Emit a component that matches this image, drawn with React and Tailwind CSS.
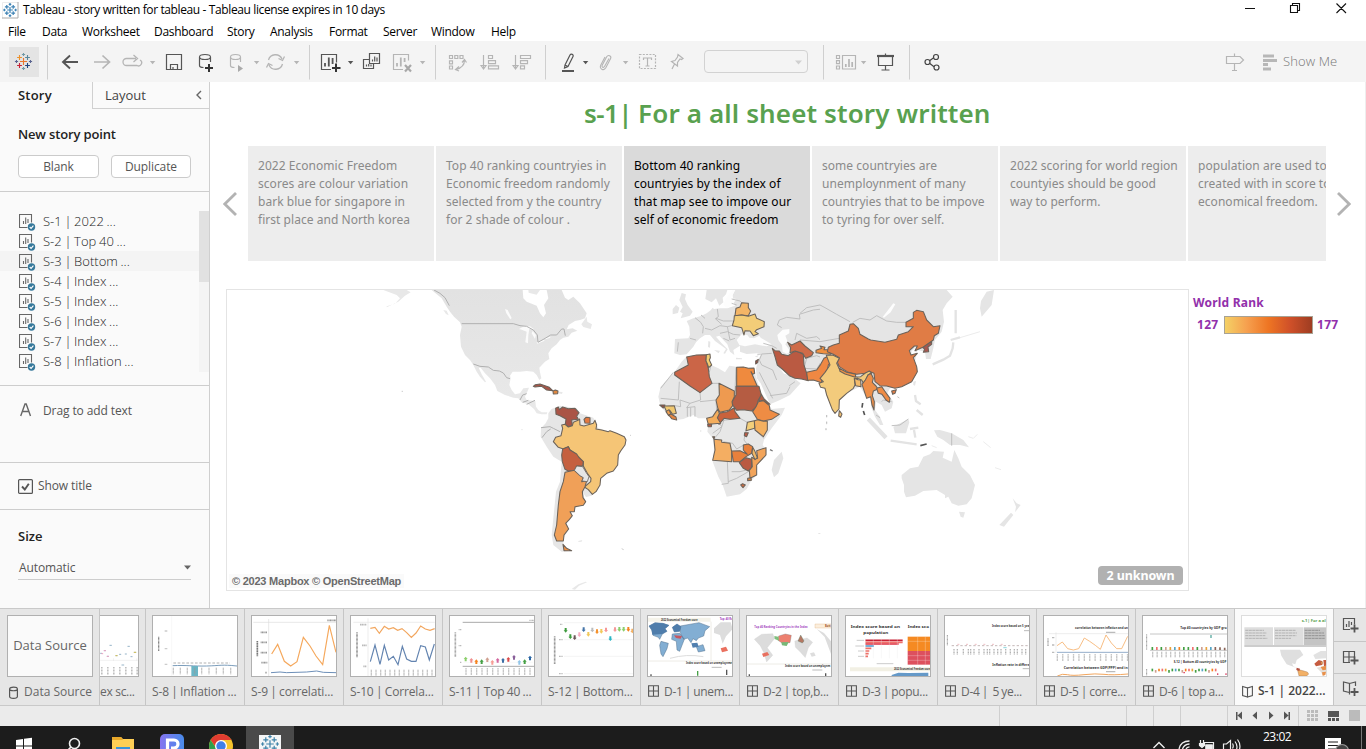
import React from "react";

/* Drawing surface whose coordinates are window pixels. */
function Ic({ x, w, y = 41, h = 41, children, s = "#b5b5b5" }) {
  return (
    <svg className="block shrink-0" width={w} height={h} viewBox={`${x} ${y} ${w} ${h}`} fill="none" stroke={s} strokeWidth="1.2">
      {children}
    </svg>
  );
}
const Caret = ({ x, c = "#b5b5b5", y = 61 }) => <path d={`M${x - 2.6} ${y}h5.4l-2.7 3.2z`} fill={c} stroke="none" />;
const Sep = ({ x }) => <path d={`M${x} 45v34.500`} stroke="#cfcfcf" strokeWidth="1" />;

function Crosses({ cx, cy, k = 1, mono }) {
  const list = [
    [0, 0, 3.6, "#e8762d"], [-4, -4, 2.4, "#eb912c"], [4, -4, 2.4, "#59879b"], [-4, 4, 2.4, "#c72035"], [4, 4, 2.4, "#1f447e"],
    [0, -7, 1.6, "#7099a6"], [0, 7, 1.6, "#7099a6"], [-7, 0, 1.6, "#5b6591"], [7, 0, 1.6, "#5b6591"],
  ];
  return list.map(([x, y, r, c], i) => (
    <path key={i} d={`M${cx + (x - r) * k} ${cy + y * k}h${2 * r * k}M${cx + x * k} ${cy + (y - r) * k}v${2 * r * k}`} stroke={mono || c} strokeWidth={mono ? 1.2 : 1.1} />
  ));
}

function TitleBar() {
  return (
    <div className="flex h-5 items-center bg-white">
      <svg className="ml-0.5 block h-[17px] w-[17px] shrink-0" viewBox="0 0 17 17" fill="none">
        <path d="M.5 16.500V.5h16" stroke="#ececec" /><path d="M16 0v16H0" stroke="#aaa" />
        <Crosses cx={8} cy={8} k={0.8} mono="#3d82b4" />
      </svg>
      <span className="ml-1 whitespace-pre font-['Open_Sans','Noto_Sans',sans-serif] text-[12px] leading-5 tracking-[-0.38px] text-black">Tableau - story written for tableau - Tableau license expires in 10 days</span>
      <div className="ml-auto flex">
        <Ic x={1236} w={130} y={0} h={20} s="#111">
          <path d="M1245 8.500h10M1290.500 5.500h7v7h-7zM1292.500 5.500v-2h7v7h-2M1336.500 3.500l9.500 9.500M1346 3.500l-9.500 9.500" strokeWidth="1.100" />
        </Ic>
      </div>
    </div>
  );
}

function MenuBar() {
  return (
    <div className="flex h-[21px] bg-white pl-2 font-['Open_Sans','Noto_Sans',sans-serif] text-[12px] leading-[23px] tracking-[-0.3px] text-black">
      <span className="w-[34px]">File</span>
      <span className="w-10">Data</span>
      <span className="w-[72px]">Worksheet</span>
      <span className="w-[73px]">Dashboard</span>
      <span className="w-[43px]">Story</span>
      <span className="w-[59px]">Analysis</span>
      <span className="w-[54px]">Format</span>
      <span className="w-12">Server</span>
      <span className="w-[60px]">Window</span>
      <span>Help</span>
    </div>
  );
}

function Toolbar() {
  const d = "#555";
  return (
    <div className="flex h-[41px] bg-[#f4f4f4]">
      <Ic x={0} w={50}>
        <rect x="9" y="47" width="30" height="30" fill="#e4e4e4" stroke="none" />
        <Crosses cx={23.5} cy={61.5} />
        <Sep x={47.5} />
      </Ic>
      <Ic x={50} w={65}>
        <path d="M78 62H63M70 55.500L63 62l7 6.500" stroke={d} strokeWidth="1.900" />
        <path d="M94 62h15M102.500 55.500l7 6.500-7 6.500" strokeWidth="1.700" />
      </Ic>
      <Ic x={115} w={45}>
        <path d="M136 58.500h-9.500a3 3 0 000 7h10.500a3 3 0 003-5.500M133.500 55l4 3.500-4 3.500" strokeWidth="1.300" />
        <Caret x={152.5} />
      </Ic>
      <Ic x={160} w={60} s={d}>
        <path d="M166.500 54.500h15v15h-15zM170.500 69.500v-5h7v5M173 67v2.500" />
        <path d="M199.500 57v8.500c0 1.300 2 2 4 2M210.500 57v5M199.500 57c0-1.500 2.500-2.500 5.500-2.500s5.500 1 5.500 2.500-2.500 2.500-5.500 2.500-5.500-1-5.500-2.500z" />
        <path d="M209 64v8M205 68h8" stroke="#333" strokeWidth="2" />
      </Ic>
      <Ic x={220} w={90}>
        <path d="M230.500 57v8.500c0 1.300 2 2 4 2M240.500 57v5M230.500 57c0-1.500 2.200-2.500 5-2.500s5 1 5 2.500-2.200 2.500-5 2.500-5-1-5-2.500z" />
        <path d="M238 65v7l5-3.500z" fill="#aaa" stroke="none" />
        <Caret x={256.5} />
        <path d="M268.500 60a7.200 7.200 0 0113.500-1M282.500 64a7.200 7.200 0 01-13.500 1M284.500 56.500l-2 4-4-2M266.500 67.500l2-4 4 2" strokeWidth="1.300" />
        <Caret x={296.5} />
        <Sep x={309.5} />
      </Ic>
      <Ic x={310} w={50} s={d}>
        <path d="M331 69.500h-9.500v-15h15v8" />
        <path d="M325 66.500V63M328.800 66.500v-9M332.600 64v-6" strokeWidth="1.800" />
        <path d="M336 63.500v8.500M332 68h8.500" stroke="#333" strokeWidth="2" />
        <Caret x={350.5} c={d} />
      </Ic>
      <Ic x={360} w={76} s={d}>
        <path d="M369.500 53.500h10v10h-10zM369 59.500h-5.500v9h10v-5M372.500 61.500v-2M374.700 61.500v-5M377 61.500v-4M366.500 66.500v-2M368.700 66.500v-2.500M371 66.500v-2" />
        <g stroke="#b5b5b5"><path d="M403 69.500h-9.500v-15h15v6" /><path d="M397 66.500V63M400.800 66.500v-9M404.600 62v-4" strokeWidth="1.800" /><path d="M405 65l6 6.500M411 65l-6 6.500" strokeWidth="2.200" stroke="#a8a8a8" /></g>
        <Caret x={422.5} />
        <Sep x={435.5} />
      </Ic>
      <Ic x={436} w={110}>
        <path d="M449.500 55.500h3v3h-3zM454.800 55.500h3v3h-3zM460 55.500h3v3h-3zM449.500 60.800h3v3h-3zM449.500 66h3v3h-3zM464.500 60c0 5-2.500 8-8.500 9.500M462 62.500l2.500-3 2 3M459 66.500l-3.500 3 3.500 1.500" />
        <path d="M483.500 55v13M481 65.500l2.500 3.500 2.500-3.500zM488.500 55.500h4v3h-4zM488.500 60.700h7v3h-7zM488.500 65.800h10v3h-10z" />
        <path d="M515.500 55v13M513 65.500l2.500 3.500 2.500-3.500zM520.500 55.500h10v3h-10zM520.500 60.700h7v3h-7zM520.500 65.800h4v3h-4z" />
        <Sep x={545.5} />
      </Ic>
      <Ic x={546} w={50} s={d}>
        <path d="M562 71h12" strokeWidth="2" />
        <path d="M565 65l5-10c1-1.700 4-.5 3 1.500l-5 10-3.500 1.500zM565 65l3 1.500" />
        <Caret x={585.5} c={d} />
      </Ic>
      <Ic x={596} w={40}>
        <path d="M609 58.500l-4.500 8c-1 1.700-3.200.5-2.300-1.200l4.500-8.500c1.500-2.600 5.200-.7 3.800 2l-4.700 9c-2 3.500-7 1-5-2.700l4.200-8" strokeWidth="1.100" />
        <Caret x={625.5} />
      </Ic>
      <Ic x={636} w={60}>
        <rect x="639.500" y="54.500" width="16" height="14" strokeDasharray="2 1.300" />
        <path d="M643.500 60v-2h8v2M647.500 58v8M645.500 66h4" />
        <path d="M678 54.500l5 4-1.500 1-1.500-.5-2.500 3.500v3.500l-6-4.500 3.500-1 2.500-3.500zM674.500 64l-2.500 5" />
      </Ic>
      <div className="ml-2 mt-[9px] h-[23px] w-[104px] rounded-sm border border-[#d2d2d2]">
        <Ic x={704} w={102} y={51} h={21} s="#ccc"><path d="M794 60.500h7l-3.500 4z" fill="#d0d0d0" stroke="none" /></Ic>
      </div>
      <Ic x={808} w={62}>
        <Sep x={823.5} />
        <path d="M836.500 55.500h3v3h-3zM836.500 60.700h3v3h-3zM836.500 66h3v3h-3zM842.500 55.500h13v13.500h-13z" />
        <path d="M845.800 67v-3M849 67v-8M852.200 67v-5" strokeWidth="1.700" />
        <Caret x={863.5} />
      </Ic>
      <Ic x={870} w={40} s={d}>
        <path d="M877 56h17" strokeWidth="2.200" />
        <path d="M878.500 57v8.500h14V57M885.500 66v4M881.500 70h8M885.500 53.500v2" />
        <Sep x={909.5} />
      </Ic>
      <Ic x={910} w={40} s="#444">
        <path d="M929.500 60.800l4.200-3M929.500 63.200l4.500 3.500" />
        <circle cx="927.500" cy="62" r="2.500" /><circle cx="936" cy="57" r="2.500" /><circle cx="936.500" cy="67.500" r="2.500" />
      </Ic>
      <div className="ml-auto flex">
        <Ic x={1220} w={60}>
          <path d="M1226.500 56.500h13.500l3.500 3.500-3.500 3.500h-13.500zM1234.500 53.500v3M1234.500 63.500v7M1232 70.500h5" />
          <path d="M1263 56h11M1263 60.500h14M1263 64.500h5M1263 69h8" stroke="#b7b7b7" strokeWidth="3" />
        </Ic>
        <span className="w-[86px] pl-[3px] font-['Open_Sans',sans-serif] text-[13px] font-light leading-[41px] tracking-[0.1px] text-[#777]">Show Me</span>
      </div>
    </div>
  );
}

const POINTS = ["S-1 | 2022 ...", "S-2 | Top 40 ...", "S-3 | Bottom ...", "S-4 | Index ...", "S-5 | Index ...", "S-6 | Index ...", "S-7 | Index ...", "S-8 | Inflation ..."];

function SheetIcon() {
  return (
    <svg className="block h-[18px] w-[18px] shrink-0" viewBox="0 0 18 18" fill="none" stroke="#666" strokeWidth="1.100">
      <path d="M8.500 13.500H.5V.5h12v8M4.500 10V7M6.700 10V3.500M9 9V5" />
      <circle cx="12.500" cy="13" r="3.700" fill="#37799b" stroke="none" />
      <path d="M10.700 13l1.400 1.400 2.300-2.700" stroke="#fff" />
    </svg>
  );
}

function Sidebar() {
  return (
    <aside className="flex w-[210px] shrink-0 flex-col border-r border-[#cfcfcf] bg-[#fafafa] font-['Open_Sans',sans-serif] text-[12px] tracking-[-0.1px] text-[#555]">
      <div className="flex h-[27px] text-[13px] leading-[27px] tracking-normal">
        <div className="w-[92px] pl-[18px] font-semibold tracking-[0.2px] text-[#222]">Story</div>
        <div className="flex flex-1 border-b border-l border-[#d0d0d0] pl-3 text-[#444]">
          <span className="w-[85px]">Layout</span>
          <Ic x={190} w={14} y={82} h={26} s="#666"><path d="M201 91l-4 4 4 4" strokeWidth="1.400" /></Ic>
        </div>
      </div>
      <div className="flex h-[83px] flex-col border-b border-[#cdcdcd] pl-[18px]">
        <div className="mt-4 text-[13px] font-semibold leading-[18px] tracking-[-0.15px] text-[#222]">New story point</div>
        <div className="mt-3 flex gap-3">
          <div className="h-[23px] w-[81px] rounded-sm border border-[#cbcbcb] bg-white text-center leading-[21px]">Blank</div>
          <div className="h-[23px] w-20 rounded-sm border border-[#cbcbcb] bg-white text-center leading-[21px]">Duplicate</div>
        </div>
      </div>
      <div className="flex h-[194px] border-b border-[#cdcdcd] pt-[19px]">
        <div className="flex-1">
          {POINTS.map((p, i) => (
            <div key={p} className={i === 2 ? "flex h-5 items-center bg-[#f4f4f4] pl-[19px]" : "flex h-5 items-center pl-[19px]"}>
              <span className="pt-1"><SheetIcon /></span>
              <span className="ml-1.5 text-[13px] font-light leading-5 tracking-[0.03px] text-[#222] [word-spacing:-0.8px]">{p}</span>
            </div>
          ))}
        </div>
        <div className="h-[161px] w-2.5 bg-[#f4f4f4]"><div className="h-[71px] bg-[#e1e1e1]" /></div>
      </div>
      <div className="flex h-[77px] items-start border-b border-[#cdcdcd] pl-5 pt-4">
        <Ic x={20} w={12} y={402} h={18} s="#666"><path d="M20.700 416l4.300-12h1.200l4.300 12M22 411.500h7.200" strokeWidth="1.400" /></Ic>
        <span className="ml-[11px] leading-[18px]">Drag to add text</span>
      </div>
      <div className="flex h-[47px] items-center border-b border-[#cdcdcd] pl-[18px]">
        <Ic x={0} w={15} y={0} h={15} s="#555"><rect x=".6" y=".6" width="13.800" height="13.800" rx="1" /><path d="M4 7.500l2.800 3 4-5.800" strokeWidth="1.900" /></Ic>
        <span className="ml-[5px]">Show title</span>
      </div>
      <div className="mt-[16px] pl-[18px] text-[13px] font-semibold leading-[20px] tracking-normal text-[#222]">Size</div>
      <div className="ml-[18px] mt-[10px] flex h-[24px] w-[173px] items-center justify-between border-b border-[#cdcdcd] pl-px">
        <span className="leading-[22px]">Automatic</span>
        <Ic x={0} w={7} y={0} h={5}><path d="M0 .5h7L3.500 4.500z" fill="#666" stroke="none" /></Ic>
      </div>
    </aside>
  );
}

const CARDS = [
  ["2022 Economic Freedom", "scores are colour variation", "bark blue for singapore in", "first place and North korea"],
  ["Top 40 ranking countryies in", "Economic freedom randomly", "selected from y the country", "for 2 shade of colour ."],
  ["Bottom 40 ranking", "countryies by the index of", "that map see to impove our", "self of economic freedom"],
  ["some countryies are", "unemploynment of many", "countryies that to be impove", "to tyring for over self."],
  ["2022 scoring for world region", "countyies should be good", "way to perform."],
  ["population are used to", "created with in score to", "economical freedom."],
];

const NORTH_AMERICA = "M155 15L185 40L200 65L210 80L222 95L240 112L245 125L240 150L243 185L255 210L270 225L280 240L290 260L300 275L315 292L318 290L305 268L296 248L302 248L315 265L330 280L345 300L352 318L375 330L400 338L415 340L425 352L445 358L462 372L470 385L485 388L500 388L502 382L485 382L475 375L468 365L466 348L440 345L435 335L443 318L447 308L430 310L420 325L405 328L395 315L388 300L392 280L390 272L398 260L420 260L440 258L460 260L470 270L478 285L484 280L480 262L478 248L495 230L508 222L505 205L515 190L530 178L540 165L550 158L565 155L575 143L592 137L578 130L560 133L566 120L585 108L600 105L615 100L620 85L600 55L580 35L565 45L555 38L545 15L500 15L505 40L492 60L498 85L490 97L480 85L470 62L440 50L430 40L428 15Z";
const SOUTH_AMERICA = "M505 385L515 372L540 362L590 370L600 385L640 398L655 430L710 445L738 465L735 480L715 510L705 550L690 560L662 580L655 605L635 632L618 636L608 622L617 655L585 670L570 685L577 697L560 712L565 735L550 760L550 795L575 797L545 800L520 780L515 750L520 700L528 620L540 590L545 530L520 515L500 485L482 455L483 430L497 415L505 400Z";

const AMERICAS = [
  ["M460 304L466 299L480 297L495 302L508 307L518 317L500 315L485 304L465 306Z", "#a85447"],
  ["M519 318L526 315L534 318L533 326L520 327Z", "#e0873f"],
  ["M527 370L535 366L538 374L548 366L565 371L585 370L597 383L590 394L595 403L575 405L577 420L565 426L556 418L558 402L540 392L528 388Z", "#aa5446"],
  ["M612 403L618 397L630 398L630 415L615 414Z", "#e37840"],
  ["M545 420L555 418L565 426L577 422L580 412L594 406L599 402L600 420L612 423L630 418L640 415L645 406L650 420L648 432L665 435L685 440L690 437L710 445L733 455L738 465L735 480L722 498L715 510L713 540L700 558L680 565L662 580L660 600L648 620L637 628L625 614L613 606L632 590L633 580L622 565L610 543L610 530L595 520L585 505L570 495L565 485L550 492L535 487L520 470L527 457L543 452L548 430Z", "#f5c576"],
  ["M548 492L565 485L570 495L590 507L596 516L610 530L608 543L590 543L583 558L565 558L555 553L547 530L545 510Z", "#c5603f"],
  ["M555 562L583 556L600 572L610 578L605 590L620 588L615 605L607 620L609 638L617 650L610 661L585 665L583 680L570 680L577 692L567 705L557 715L566 732L552 750L550 768L530 768L523 750L530 720L535 660L540 620L550 590Z", "#f0a058"],
  ["M549 778L560 790L575 797L552 797Z", "#ef9045"],
];

const EURASIA = "M285 15L278 30L280 50L285 62L262 70L240 70L222 72L218 68L212 76L200 85L185 92L160 100L140 108L148 125L150 150L145 160L105 162L103 205L120 210L140 208L160 185L168 172L180 160L195 150L210 150L225 168L245 182L258 192L250 205L255 206L263 193L245 175L228 155L238 152L250 165L262 178L270 200L283 210L280 195L300 182L300 200L320 207L350 205L366 205L358 218L348 250L350 280L362 295L380 335L390 358L420 345L450 330L482 295L465 282L450 270L432 266L412 240L440 262L470 282L530 288L545 300L600 300L600 15Z";
const AFRICA = "M140 214L170 209L205 207L213 240L235 250L255 262L268 242L290 245L325 250L343 250L348 275L362 320L385 355L395 372L435 368L425 390L395 430L372 465L368 480L380 495L378 515L350 540L348 572L332 590L320 612L300 628L260 635L248 600L235 575L218 530L222 490L218 460L202 440L205 420L200 400L175 400L160 390L130 402L110 405L90 395L62 365L55 335L62 305L80 285L103 262L125 230Z";
const WEST = [
  ["M140 216L170 210L200 209L198 225L205 250L208 275L216 295L180 323L150 303L104 270L104 262L145 240Z", "#cb6547"],
  ["M199 209L210 207L211 218L208 225L215 240L206 248L202 236L198 228Z", "#f5cd72"],
  ["M290 247L310 246L325 250L342 249L344 265L338 268L333 260L352 304L290 304Z", "#ef8a3e"],
  ["M288 304L357 304L364 330L355 345L350 365L335 378L310 374L290 376L278 360L276 350L288 330Z", "#b55c42"],
  ["M364 328L372 342L390 358L385 358L370 346L356 348Z", "#b55c42"],
  ["M237 295L283 318L283 335L276 350L278 362L268 375L240 382L234 372L228 345L238 330Z", "#ee9a50"],
  ["M235 388L240 384L262 380L283 368L285 380L300 400L270 403L252 400L237 418L232 398Z", "#c9623c"],
  ["M234 372L238 386L232 398L242 415L205 418L200 400L218 395L228 380Z", "#f4ad5c"],
  ["M355 350L370 347L388 362L390 375L418 388L395 403L370 408L352 403L338 380L348 365Z", "#ee8c44"],
  ["M343 408L352 404L370 409L382 408L382 435L370 455L345 435Z", "#f4b060"],
  ["M322 412L343 407L344 430L318 437Z", "#f4cf7a"],
  ["M314 443L325 443L320 455L313 452Z", "#c05a45"],
  ["M222 463L245 465L245 472L270 475L275 500L275 530L218 526L225 495Z", "#f4ae62"],
  ["M275 498L300 497L322 508L310 495L310 480L325 477L338 485L335 505L318 515L300 530L280 530Z", "#e8803c"],
  ["M298 533L318 518L335 523L335 548L325 558L310 550Z", "#ba5a42"],
  ["M335 517L345 522L353 520L350 497L378 488L378 510L350 540L350 570L330 580L328 556L337 545Z", "#f2a45a"],
  ["M338 487L344 497L352 518L345 524L336 505Z", "#f2b866"],
  ["M302 600L308 596L316 600L309 608Z", "#d06b40"],
  ["M323 580L333 578L334 586L323 587Z", "#d98443"],
  ["M72 363L103 362L109 385L98 388L90 377L80 380Z", "#f0c870"],
  ["M59 360L75 360L70 369Z", "#9a4a40"],
  ["M78 380L87 374L93 387L86 392Z", "#f0a050"],
  ["M86 390L93 387L108 396L110 405L95 401Z", "#e58440"],
  ["M203 418L215 418L214 425L204 425Z", "#b5553f"],
  ["M218 455L224 455L222 462Z", "#a5553f"],
  ["M288 70L300 66L305 53L325 55L325 68L332 78L325 92L305 90L285 92Z", "#f4b566"],
  ["M283 92L305 90L325 94L345 87L350 100L373 110L372 125L350 134L345 140L355 146L340 152L330 138L315 137L312 150L305 128L277 122L282 105Z", "#f3cd78"],
  ["M347 228L355 223L353 233L347 237Z", "#9a4a40"],
  ["M397 190L405 197L418 198L425 208L445 212L458 202L470 199L490 208L492 240L500 265L505 287L485 282L465 280L448 272L430 255L412 240L405 215Z", "#ba5a42"],
  ["M443 172L455 180L480 168L495 183L520 203L515 212L497 220L488 205L465 198L450 203L452 188Z", "#cf6b48"],
  ["M500 262L530 255L542 238L552 220L567 212L580 225L565 240L560 265L545 280L545 293L520 285L503 286Z", "#ef8843"],
  ["M528 196L545 190L540 183L555 187L552 194L568 194L572 208L550 206L528 203Z", "#f09040"],
];
const EAST = [
  ["M85 187L100 180L118 175L118 150L145 138L150 118L160 116L175 130L180 148L205 162L212 165L255 172L290 163L295 150L325 140L340 125L318 125L318 112L340 100L340 82L350 76L370 80L380 105L400 125L420 122L415 145L403 152L400 165L370 186L345 197L352 183L343 183L328 197L333 210L352 205L340 218L350 245L352 260L335 290L305 305L285 310L260 303L240 302L225 290L222 265L210 260L195 265L170 268L145 262L118 245L112 232L118 218L100 208L82 200Z", "#e07c45"],
  ["M368 188L395 170L395 178L384 186L386 200L370 202L374 192Z", "#a8564e"],
  ["M79 211L98 210L118 220L110 235L118 252L140 265L163 273L170 276L182 275L196 264L208 258L215 264L204 270L198 284L190 295L185 285L172 280L163 282L165 300L160 310L140 325L118 345L117 372L105 385L97 374L80 330L75 310L62 307L57 295L70 290L60 280L75 262L90 240Z", "#f3cb7c"],
  ["M118 377L126 387L122 397L116 393Z", "#f3c070"],
  ["M118 250L140 262L167 268L166 277L135 267L120 259Z", "#ef9145"],
  ["M163 280L174 284L182 285L183 305L167 302Z", "#f3bb6a"],
  ["M213 265L220 280L217 292L228 303L234 312L220 318L217 332L223 350L222 375L216 360L212 335L200 340L190 310L186 298L196 285L204 270Z", "#ee8e47"],
  ["M230 310L245 305L254 318L270 340L268 352L258 345L246 328L235 325Z", "#ef8c45"],
  ["M275 318L289 314L285 325L278 328Z", "#e07c45"],
];

function WorldMap() {
  return (
    <svg className="block h-[300px] w-[961px]" viewBox="227 290 961 300" fill="none">
      <defs>
        <linearGradient id="land" x1="0" y1="0" x2="0" y2="1"><stop offset="0" stopColor="#e2e2e2" /><stop offset="1" stopColor="#e9e9e9" /></linearGradient>
      </defs>
      <g transform="translate(380 285) scale(.33333)">
        <path d={NORTH_AMERICA} fill="url(#land)" />
        <path d={SOUTH_AMERICA} fill="#e6e6e6" />
        <path d="M20 64L45 56L60 40L50 30L10 15H80L92 22L75 32L55 50L20 67ZM604 118L620 95L622 110L636 118L632 132L610 126ZM190 75l10 2 6 14-8-4ZM595 768l12-3-2 5-10 1ZM575 912l20-14 22-8 4 2-24 10-12 12ZM536 320l12 1-2 6-10-2ZM445 15h35l-10 14-24-6Z" fill="#e8e8e8" />
        <path d="M417 132L432 124L450 124L462 133L448 132L445 150L444 175L436 172L440 140L425 134ZM458 138L468 150L465 162L455 145ZM470 172l22-8 2 3-22 9ZM495 160l16-5v3l-15 5ZM375 72l8 3 12 24-4 4-12-18Z" fill="#fbfbfb" />
        <path d="M245 116H400L420 122L440 124L460 135L472 150L474 172L492 162L512 150L530 150L545 132L552 132L556 152M162 15L180 25L195 38L208 62M280 237L300 244L325 246L340 256L358 258L370 264L380 278L390 281M420 345L428 330L440 326M428 352L445 346M440 358L465 346M483 428L510 425L520 430L540 440M486 458L500 440L512 432" stroke="#b0b0b0" strokeWidth="3" />
        {AMERICAS.map(([d, f]) => <path key={d} d={d} fill={f} stroke="#6b6259" strokeWidth="3.200" strokeLinejoin="round" />)}
        <path d="M583 556L590 543L608 545L618 562L627 575L622 590L606 588L610 578L600 572Z" fill="#e6e6e6" stroke="#6b6259" strokeWidth="2.500" />
        <path d="M65 319h4M425 434h2M725 791l6 3M750 451h3" stroke="#ccc" strokeWidth="3" />
      </g>
      <g transform="translate(640 285) scale(.33333)">
        <path d={EURASIA} fill="#e5e5e5" />
        <path d={AFRICA} fill="#e7e7e7" />
        <path d="M200 15H262L258 28L248 38L250 52L238 62L228 40L215 52L196 42ZM125 24L138 28L135 42L143 60L158 80L150 92L122 100L128 85L120 80L128 66L118 45ZM98 72L108 60L118 68L114 84L98 88ZM425 500L430 520L415 565L402 577L395 555L402 525ZM222 195l18 2-4 8ZM205 168l6 2-1 18-6-2ZM288 218l18 2v3h-18ZM344 215l12-5-4 7Z" fill="#e5e5e5" />
        <path d="M290 165L305 148L322 150L328 158L342 160L358 152L362 158L395 178L380 184L345 178L315 184L298 180ZM412 150L428 134L448 132L448 145L436 152L442 168L436 178L452 200L440 206L428 200L426 180L415 165ZM262 70L250 60L256 45L265 30L278 15H286L272 40L290 42L280 55Z" fill="#fdfdfd" />
        <path d="M115 172L112 200M150 160L168 165M165 98L182 112L190 125L188 145M183 90L195 100M232 72L235 95L228 100L250 108L280 108M195 130L215 135L240 122L262 125L275 122M225 100L245 118M240 145L262 140L280 148L300 150M262 125L270 165L285 160M250 160L268 168M275 55L290 60M275 42L300 48L305 53M412 120L418 105L440 97L480 102L478 88L520 75L548 72L565 82L600 90M412 120L425 128M465 165L470 145L500 160L530 155L545 168L600 165M370 175L395 182L410 190M352 208L395 205M365 208L358 225L365 240L398 255L410 285M358 262L398 340M390 332L440 325L450 305M448 302L465 290M100 262L62 310M118 290L115 345L62 340M180 323L182 345L150 355L120 345M216 295L237 295M180 350L228 345M120 345L122 365L105 362M142 365V395M152 368V395M165 365V395M228 348L230 375M150 355L140 368L165 365M288 247L285 318M208 262L213 240M240 415L245 425L218 445M252 405L240 440L225 458M240 407L300 400L322 412M318 437L312 465L322 478M345 435L372 460M315 478L290 492L278 475L250 470M262 530L265 595L245 598M275 560L300 560L320 555M265 590L290 580L325 560M500 220L492 250L530 252L550 220L530 212Z" stroke="#b8b8b8" strokeWidth="2.600" />
        <path d="M560 390v8M560 410v8M558 430v6M180 438h4" stroke="#ddd" strokeWidth="3" />
        <path d="M390 494l8 4" stroke="#777" strokeWidth="4" />
      </g>
      <g transform="translate(800 285) scale(.33333)">
        <path d="M60 15L440 15L458 35L440 55L428 75L432 110L425 140L405 165L400 190L392 222L378 222L375 200L352 195L345 230L352 250L350 265L335 290L300 305L270 310L262 325L280 350L275 370L255 380L245 360L228 350L225 375L240 395L250 420L240 420L225 395L215 370L210 340L200 338L180 305L140 325L60 260ZM543 48L560 20L582 15L575 60L545 95L540 70ZM280 425L325 402L328 412L318 445L285 445ZM402 436L420 435L455 445L490 465L507 487L480 480L450 480L430 465L412 455ZM305 570L330 550L355 545L370 515L390 508L400 498L432 500L428 518L455 530L463 495L475 520L485 545L510 570L525 600L515 640L500 658L475 662L455 655L445 635L435 640L435 630L410 615L370 618L345 632L318 637L312 620L312 600L305 580ZM477 680L495 682L490 698L482 695ZM638 640L650 655L662 660L645 682L648 665ZM633 683L640 690L612 725L598 720ZM340 290l8-2-3 14-5-2ZM55 744h6v3h-6Z" fill="#e5e5e5" />
        <path d="M335 198L350 184L352 192L343 197L352 203L334 210ZM248 96L280 55L286 58L272 82L252 98Z" fill="#fdfdfd" />
        <path d="M398 238L430 224L450 212L458 190L460 172M452 165L480 157M467 75V145M345 330L348 348L362 358M350 375L368 390M330 432L355 428M342 435L346 458M272 467L350 478" stroke="#e3e3e3" strokeWidth="7" />
        <path d="M205 402L258 458" stroke="#e3e3e3" strokeWidth="13" />
        <path d="M480 158L540 140M505 455l15 5 12-12M550 470l22 18M585 548l18 6M395 482l15 6" stroke="#ececec" strokeWidth="3" />
        <path d="M158 112L180 100L210 105L230 92L260 108L290 112L318 112M455 445V482M0 85L20 68L60 60L75 68L110 88L150 110M0 165L60 170L118 160M245 350L250 345L275 350M275 422L300 420L325 402M80 390v6M80 410v6M78 430v5M292 335l6 4M228 390l12 8" stroke="#b8b8b8" strokeWidth="2.600" />
        <path d="M188 354l-2 14M190 378l4 12M361 482L380 477" stroke="#555" strokeWidth="5" />
      </g>
      <g transform="translate(640 285) scale(.33333)">
        {WEST.map(([d, f]) => <path key={d} d={d} fill={f} stroke="#6b6259" strokeWidth="3.200" strokeLinejoin="round" />)}
      </g>
      <g transform="translate(800 285) scale(.33333)">
        {EAST.map(([d, f]) => <path key={d} d={d} fill={f} stroke="#6b6259" strokeWidth="3.200" strokeLinejoin="round" />)}
      </g>
    </svg>
  );
}

function StoryView() {
  return (
    <main className="flex min-w-0 flex-1 flex-col border-r border-[#eee] bg-white font-['Noto_Sans',sans-serif]">
      <h1 className="h-16 whitespace-pre pl-[374px] pt-3 text-[26px] font-semibold leading-[38px] tracking-[0.13px] text-[#59a14f]"><span className="tracking-[-0.6px]">s-1| </span>For a all sheet story written</h1>
      <div className="flex h-[115px]">
        <div className="flex w-[38px] items-center pl-[13px]">
          <svg className="block h-6 w-[14px]" viewBox="0 0 14 24" fill="none"><path d="M13 1L1.800 12L13 23" stroke="#b3b3b3" strokeWidth="2.800" /></svg>
        </div>
        <div className="flex w-[1078px] gap-0.5 overflow-hidden">
          {CARDS.map((lines, i) => (
            <div key={i} className={i === 2 ? "w-[186px] shrink-0 bg-[#dadada] pl-2.5 pt-[11px] text-[12px] leading-[18px] tracking-[0.05px] text-black" : "w-[186px] shrink-0 bg-[#ededed] pl-2.5 pt-[11px] text-[12px] leading-[18px] tracking-[0.04px] text-[#8a8a8a]"}>
              {lines.map((l) => <div key={l} className="whitespace-pre">{l}</div>)}
            </div>
          ))}
        </div>
        <div className="flex flex-1 items-center pl-[11px]">
          <svg className="block h-6 w-[14px]" viewBox="0 0 14 24" fill="none"><path d="M1 1L12.200 12L1 23" stroke="#b3b3b3" strokeWidth="2.800" /></svg>
        </div>
      </div>
      <div className="mt-7 flex pl-4">
        <div className="relative h-[302px] w-[963px] border border-[#e4e4e4]">
          <WorldMap />
          <span className="absolute bottom-0.5 left-0.5 whitespace-pre bg-[#fafafa] px-[3px] font-['Liberation_Sans',sans-serif] text-[11px] font-bold leading-[14px] tracking-[-0.23px] text-[#6a6a6a]">© 2023 Mapbox © OpenStreetMap</span>
          <span className="absolute bottom-[5px] right-[5px] h-[19px] w-[85px] rounded-sm bg-[#b1b1b1] text-center text-[12.500px] font-bold leading-[19px] tracking-[-0.1px] text-white">2 unknown</span>
        </div>
        <div className="ml-1 pt-[5px] text-[12px] font-bold text-[#9230ab]">
          <div className="leading-[17px] tracking-[0.2px]">World Rank</div>
          <div className="mt-[5px] flex h-[18px] items-center pl-1">
            <span className="w-[27px] tracking-[0.3px]">127</span>
            <div className="h-[18px] w-[89px] border border-[#a8a294] bg-[linear-gradient(90deg,#f4d166_0%,#f6a04f_25%,#ee7523_50%,#cf5029_75%,#9e3d22_100%)]" />
            <span className="ml-1 tracking-[0.3px]">177</span>
          </div>
        </div>
      </div>
    </main>
  );
}

/* Sheet thumbnails. Each one has its own drawing units, three to a pixel. */
const Th = ({ x, children }) => <svg className="block h-[60px] w-[84px]" viewBox={`${x} 33 252 180`} fill="none">{children}</svg>;
const Arrows = ({ pts, up }) => pts.map(([x, y, c], i) => (
  <path key={i} d={up ? `M${x - 6} ${y}l6-7 6 7h-3v7h-6v-7z` : `M${x - 6} ${y}l6 7 6-7h-3v-7h-6v7z`} fill={c} />
));
const Legend = ({ xs, y, h = 20 }) => xs.map((x) => <path key={x} d={`M${x} ${y}v${h}`} stroke="#999" strokeWidth="4" strokeDasharray="3 1.500" opacity=".75" />);
const range = (a, n, s) => Array.from({ length: n }, (_, i) => a + i * s);
const Lab = ({ x, y, size, children, fill = "#333", ...p }) => <text x={x} y={y} fontSize={size} fill={fill} fontWeight="700" fontFamily="Noto Sans, sans-serif" lengthAdjust="spacingAndGlyphs" {...p}>{children}</text>;

const WORLD = "M0 10L18 0L42 2L60 8L48 18L54 26L40 34L32 50L28 44L12 38L8 22ZM36 56L58 62L54 78L42 102L36 94L32 68ZM70 14L84 4L96 12L92 26L76 28ZM70 34L92 32L106 50L92 86L84 82L82 56L68 50ZM94 10L150 0L182 12L168 24L164 40L148 46L142 54L132 48L126 60L116 46L104 50L94 30ZM142 72L162 66L168 84L148 88Z";

function Thumb({ kind }) {
  switch (kind) {
    case "scatter":
      return <svg className="block h-[60px] w-[39px]" viewBox="300 33 116 180" fill="none"><path d="M300 145h6M320 154h6M328 121h7M346 152h6M357 148h6M374 147h6M382 124h7M391 155h6M401 142h7M311 137h6M364 180h8" stroke="#96b4c8" strokeWidth="3" /><path d="M311 137h6M320 154h6M304 146h5" stroke="#f0a0c0" strokeWidth="3" /><path d="M346 152h6M401 142h7" stroke="#d8c050" strokeWidth="3" /><path d="M340 160v8M410 160v8M300 166h112" stroke="#e5e5e5" strokeWidth="1.500" /><Legend xs={[305, 323, 341, 359, 377, 395, 411]} y={186} h={24} /></svg>;
    case "bars":
      return <Th x={459}><path d="M515 33V213" stroke="#e8e8e8" /><path d="M518 182C560 180 580 184 620 183S665 178 711 183" stroke="#7b9dbb" strokeWidth="3" /><path d="M574 183h20v30h-20z" fill="#6bb5c5" /><path d="M494 78h9M494 131h9M494 178h9M520 174h170" stroke="#ccc" strokeWidth="4" strokeDasharray="8 5" /><path d="M476 95v44" stroke="#888" strokeWidth="4" strokeDasharray="3 1" /><Legend xs={[520, 541, 562, 584, 605, 627, 649, 670, 692]} y={188} /></Th>;
    case "lines":
      return <Th x={756}><path d="M806 42V213M760 52h248" stroke="#ddd" strokeWidth="2" /><path d="M815 147L833 118L853 169L872 183L891 170L910 97L930 123L948 153L968 179L988 61L1008 142" stroke="#f5a85c" strokeWidth="3.500" /><path d="M813 203L840 201L860 203L920 201L950 198L970 202L1008 203" stroke="#6d8fb8" strokeWidth="3" /><path d="M782 82h20M782 112h20M782 143h20M784 173h18M796 203h5M982 46h26" stroke="#999" strokeWidth="5" strokeDasharray="3 1" /><path d="M772 108v46" stroke="#777" strokeWidth="5" strokeDasharray="4 1" /></Th>;
    case "dual":
      return <Th x={1053}><path d="M1104 40V213M1060 52h244" stroke="#e4e4e4" strokeWidth="2" /><path d="M1111 70L1125 67L1138 85L1153 64L1166 72L1180 68L1193 76L1206 71L1220 83L1234 97L1248 84L1262 63L1276 72L1290 76L1304 71" stroke="#f2a65e" strokeWidth="3.500" /><path d="M1111 170L1125 120L1140 178L1153 121L1166 165L1180 154L1194 179L1207 124L1220 162L1234 169L1248 169L1262 122L1276 126L1288 165L1303 117" stroke="#6384b0" strokeWidth="3.500" /><path d="M1080 59h20M1086 121h14M1090 184h9" stroke="#bbb" strokeWidth="5" strokeDasharray="4 1" /><path d="M1071 82v76" stroke="#999" strokeWidth="5" strokeDasharray="3 1" /><Legend xs={range(1114, 14, 14)} y={194} h={19} /></Th>;
    case "up":
      return <Th x={30}><path d="M68 52h216M68 184h216" stroke="#999" strokeWidth="2.500" /><path d="M70 172h210" stroke="#eee" /><Arrows up pts={[[77, 162, "#8ccf6c"], [94, 166, "#f09090"], [109, 170, "#f58320"], [125, 170, "#45a045"], [142, 164, "#d0a090"], [157, 172, "#f79c95"], [173, 166, "#d3669e"], [189, 166, "#3d6ea5"], [205, 163, "#d94a4a"], [222, 157, "#8a609a"], [238, 172, "#92c5e8"], [254, 170, "#45a045"], [270, 159, "#2b67a5"]]} /><path d="M56 74h9M56 122h9M60 172h5M268 46h16" stroke="#bbb" strokeWidth="4" strokeDasharray="3 1" /><path d="M46 82v74" stroke="#aaa" strokeWidth="5" strokeDasharray="3 1" /><Legend xs={range(78, 13, 16)} y={190} h={20} /></Th>;
    case "down":
      return <Th x={327}><path d="M372 53h208M372 104h208M372 154h208M372 206h208" stroke="#eee" strokeWidth="2" /><Arrows pts={[[377, 76, "#3f9c3f"], [391, 95, "#3f9c3f"], [404, 98, "#6b5757"], [418, 89, "#f7aac0"], [431, 74, "#4474a8"], [445, 88, "#f2c95c"], [457, 75, "#bcbcbc"], [471, 80, "#f5922e"], [484, 79, "#f2c95c"], [498, 75, "#f59898"], [511, 101, "#29b6c5"], [525, 74, "#f59898"], [538, 73, "#8ccf6c"], [551, 73, "#8ccf6c"], [565, 73, "#f58320"], [577, 78, "#f5b060"]]} /><path d="M360 58h8M357 104h11M357 154h11M357 206h11" stroke="#bbb" strokeWidth="4" strokeDasharray="3 1" /><path d="M344 94v84" stroke="#999" strokeWidth="5" strokeDasharray="3 1" /></Th>;
    case "d1":
      return <Th x={624}><path d="M624 38h188v12H624z" fill="#f5f3ea" /><Lab x={663} y={47} size={8.5} textLength={110}>2022 Economical Freedom score</Lab><Lab x={839} y={46} size={8.5} fill="#a545c0">Top 40 Ra</Lab><g transform="translate(627 53)"><path d={WORLD} fill="#82aed3" stroke="#54728e" strokeWidth="1.500" /><path d="M0 10L18 0L42 2L60 8L48 18L54 26L40 34L10 36L8 22Z" fill="#4f7dab" /><path d="M70 14L84 4L96 12L92 26L76 28Z" fill="#4f7dab" /><path d="M75 38l24 2-4 8-14-2Z" fill="#c85860" /></g><path d="M754 115l18-2 4 12-18 3Z" fill="#5180b0" /><path d="M822 70l20-18h30l6 20-20 22-10 22-8-26-18-6Z" fill="#ddd" /><path d="M842 130l16-5 6 12-18 5Z" fill="#ea705f" /><path d="M690 160q50-14 100-5" stroke="#ddd" strokeWidth="3" /><path d="M813 50v118M624 168h252" stroke="#e5e2da" strokeWidth="2" /><Lab x={738} y={178} size={9} textLength={146}>Index score based on unemploynment</Lab><path d="M773 198v14" stroke="#45a045" strokeWidth="4" /><path d="M860 194v16M633 208v5" stroke="#555" strokeWidth="4" /><path d="M815 187h30" stroke="#bbb" strokeWidth="3" /></Th>;
    case "d2":
      return <Th x={921}><Lab x={943} y={69} size={9} fill="#a545c0" textLength={160}>Top 40 Ranking Countryies in the Index</Lab><path d="M1125 57h60v12h-60z" fill="#fbeedd" stroke="#e3b27b" /><Lab x={1155} y={67} size={8} fill="#a05020">Bott</Lab><g transform="translate(943 86) scale(.92)"><path d="M0 18L24 2L60 0L66 16L42 46L60 70L40 92L32 64L20 40ZM132 24L172 14L190 28L176 46L166 78L150 60L134 44Z" fill="#dcdcdc" stroke="#ccc" /></g><path d="M1016 93l20-6 18 4-4 22-24 1-12-8Z" fill="#ed8070" stroke="#777" /><path d="M1003 93l12 2 2 12-13-5Z" fill="#7ec07c" /><path d="M1024 112l22-1-6 12-14-2Z" fill="#78b877" /><path d="M1074 108l8-18 10 18-5 6Z" fill="#b47762" stroke="#467760" /><path d="M966 146l16-5 6 9-18 6Z" fill="#e8705f" /><path d="M1110 145l12-3 5 10-12 3Z" fill="#ddd" /><path d="M1130 72l22 12 22 26v40l-20-54Z" fill="#ddd" /><path d="M921 177h252" stroke="#e4e2da" strokeWidth="2" /><Lab x={1035} y={186} size={9} textLength={136}>Index score based on unemploynm</Lab><path d="M1117 195h30" stroke="#bbb" strokeWidth="3" /><path d="M1157 205v8M928 208v5" stroke="#555" strokeWidth="4" /></Th>;
    case "d3":
      return <Th x={1218}><Lab x={1232} y={69} size={12} textLength={148}>Index score based on</Lab><Lab x={1270} y={87} size={12} textLength={75}>population</Lab><Lab x={1403} y={70} size={12} textLength={64}>Index sco</Lab><path d="M1276 106h112" stroke="#c82035" strokeWidth="5" /><path d="M1276 112h112" stroke="#f0706a" strokeWidth="5" /><path d="M1276 117h100" stroke="#de3040" strokeWidth="4" /><path d="M1276 123h26" stroke="#5a9fd0" strokeWidth="5" /><path d="M1276 130h18M1276 138h12M1276 146h10M1276 154h8" stroke="#ed7068" strokeWidth="5" /><path d="M1276 100v60M1300 100v60M1324 100v60M1348 100v60M1372 100v60" stroke="#e8e8e8" /><path d="M1403 95h70v43h-70z" fill="#f58a22" /><path d="M1403 138h70v41h-70z" fill="#dd505e" /><path d="M1403 109h70M1403 152h70M1403 166h70M1433 95v84M1456 95v84" stroke="#fff" strokeOpacity=".5" strokeWidth="1.500" /><path d="M1230 187h240v12h-240z" fill="#f2f0e4" /><Lab x={1362} y={196} size={8} textLength={110}>2022 Economical Freedom score</Lab><path d="M1355 210l20-7 30 1 60-1v10h-110Z" fill="#6599c8" /><path d="M1250 106h22M1246 123h26M1254 138h18M1254 154h18M1310 176h50" stroke="#ccc" strokeWidth="3" /></Th>;
    case "d4":
      return <Th x={135}><Lab x={276} y={66} size={9} textLength={112}>Index score based on 5 yea</Lab><path d="M142 90v32" stroke="#999" strokeWidth="3" strokeDasharray="3 1" /><path d="M155 122h232" stroke="#b8a8a8" strokeWidth="2.500" strokeDasharray="7 6" /><path d="M172 118h140" stroke="#e8a0a8" strokeWidth="2" strokeDasharray="6 20" /><path d="M310 128h10" stroke="#55c5d0" strokeWidth="2" /><Legend xs={[162, 172, 190, 205, 212, 222, 237, 252, 262, 269, 282, 293, 303, 317, 331, 343, 352, 366, 377]} y={132} h={18} /><Lab x={277} y={184} size={9} textLength={111}>Inflation rate in differe</Lab><path d="M372 77h18M368 191h20" stroke="#bbb" strokeWidth="3" /></Th>;
    case "d5":
      return <Th x={432}><Lab x={525} y={71} size={9} textLength={159}>correlation between inflation and un</Lab><path d="M468 82V144M447 86h240" stroke="#ddd" strokeWidth="1.500" /><path d="M471 122L487 111L503 131L520 135L536 131L553 99L569 109L586 121L601 133L618 90L634 114L650 131L665 131L683 94" stroke="#f5b06a" strokeWidth="2.500" /><path d="M471 142h213" stroke="#7e9cbf" strokeWidth="2.500" /><path d="M456 98h7M456 120h7M456 142h7M618 82h28M618 200h28" stroke="#bbb" strokeWidth="4" /><path d="M444 100v24" stroke="#888" strokeWidth="3" strokeDasharray="3 1" /><Legend xs={range(472, 14, 16.2)} y={148} h={20} /><Lab x={491} y={191} size={9.5} textLength={192}>Correlation between GDP(PPP) and in</Lab><path d="M472 213q15-8 30-4t50 0 60-1 72-1" stroke="#f2a65e" strokeWidth="3" /></Th>;
    case "d6": {
      const c = ["#45a045", "#f07070", "#3f9c3f", "#d0a090", "#e8a33c", "#55a5c5", "#f58320", "#45a045"];
      return <Th x={729}><Lab x={841} y={73} size={9.5} textLength={139}>Top 40 countryies by GDP gro</Lab><path d="M750 87h232M750 136h232" stroke="#aaa" strokeWidth="2" />{range(757, 14, 13.500).map((x, i) => <path key={x} d={`M${x} 126v9`} stroke={c[i % 8]} strokeWidth="5" />)}<path d="M933 90v9" stroke="#56aaa0" strokeWidth="4" /><path d="M946 126v9M960 127v8M974 128v8" stroke="#8b6558" strokeWidth="5" /><Legend xs={range(758, 17, 13.500)} y={140} h={18} /><Lab x={821} y={173} size={8.5} textLength={158}>S-12 | Bottom 40 countryies by GDP</Lab>{range(757, 20, 10).map((x, i) => <path key={x} d={`M${x} ${i % 4 === 1 ? 195 : 191}v8`} stroke={c[(i * 3) % 8]} strokeWidth="5" />)}<path d="M740 88v46M740 192v20" stroke="#999" strokeWidth="3" strokeDasharray="3 1" /><path d="M850 203h5M953 205v5M978 205v5" stroke="#e05070" strokeWidth="4" /></Th>;
    }
    default:
      return <Th x={1026}><Lab x={1205} y={52} size={12} fill="#59a14f" textLength={72}>s-1| For a al</Lab><path d="M1033 67h86v53h-86zM1122 67h87v53h-87z" fill="#dedede" /><path d="M1211 67h70v53h-70z" fill="#c4c4c4" /><path d="M1033 123h250" stroke="#888" strokeWidth="2.500" /><path d="M1036 76h56M1036 84h64M1036 92h60M1036 100h66M1125 76h62M1125 84h66M1125 92h64M1125 100h48" stroke="#aaa" strokeWidth="2.500" strokeDasharray="9 1.500" /><path d="M1214 76h46M1214 84h58M1214 92h60M1214 100h60" stroke="#888" strokeWidth="2.500" strokeDasharray="9 1.500" /><path d="M1140 134H1200L1210 150L1190 165L1186 178L1176 175L1180 184L1192 190L1160 178L1144 152Z" fill="#dfdfdf" /><path d="M1192 193L1204 196L1222 201L1226 207L1220 213H1197Z" fill="#f2b066" stroke="#8b6045" /><path d="M1190 188l10 3-2 7-9-3Z" fill="#b55040" /><path d="M1240 150L1262 138H1280V160L1246 162Z" fill="#e2e2e2" /><path d="M1243 176L1256 165L1266 168V180L1248 184Z" fill="#c65c40" /><path d="M1262 170h6v8h-4Z" fill="#ee9a50" stroke="#8b6045" /><path d="M1270 165h10v18h-8Z" fill="#c65c40" /><path d="M1250 188L1280 182V200L1270 213L1262 200Z" fill="#e5e0da" /><path d="M1262 186L1280 182V194L1268 196ZM1266 202l12-2-2 10-8 2Z" fill="#e8904a" /></Th>;
  }
}

const TABS = [
  ["bars", "S-8 | Inflation ...", 0], ["lines", "S-9 | correlati...", 0], ["dual", "S-10 | Correla...", 0], ["up", "S-11 | Top 40 ...", 0], ["down", "S-12 | Bottom...", 0],
  ["d1", "D-1 | unem...", 1], ["d2", "D-2 | top,b...", 1], ["d3", "D-3 | popu...", 1], ["d4", "D-4 |  5 ye...", 1], ["d5", "D-5 | corre...", 1], ["d6", "D-6 | top a...", 1],
];
const Grid = () => <svg className="mb-0.5 mr-[5px] block h-3 w-[11px] shrink-0" viewBox="0 0 11 12" fill="none" stroke="#555" strokeWidth="1.100"><path d="M.6 .8h9.800v10.400H.6zM5.500 .8v10.400M.6 6h9.800" /></svg>;

function SheetTabs() {
  return (
    <div className="flex h-[98px] border-y border-[#c9c9c9] bg-[#e6e6e6] font-['Open_Sans',sans-serif] text-[12px] text-[#666]">
      <div className="w-[100px] shrink-0 border-r border-[#c6c6c6] pl-[7px] pt-1.5">
        <div className="h-[62px] w-[86px] border border-[#b0b0b0] bg-[#fafafa] text-center text-[13px] leading-[58px]">Data Source</div>
        <div className="mt-1.5 flex items-center pl-0.5 leading-[18px]">
          <Ic x={9} w={9} y={684} h={13} s="#555"><path d="M9.600 687v7.500c0 2.500 7.800 2.500 7.800 0V687c0-2.500-7.800-2.500-7.800 0s7.800 2.200 7.800 0" /></Ic>
          <span className="ml-1.5 whitespace-pre">Data Source</span>
        </div>
      </div>
      <div className="w-[46px] shrink-0 border-r border-[#c6c6c6] pt-1.5">
        <div className="h-[62px] w-[39px] border-y border-r border-[#b0b0b0] bg-white"><Thumb kind="scatter" /></div>
        <div className="mt-1.5 whitespace-pre leading-[18px] tracking-[-0.3px]">ex sc...</div>
      </div>
      {TABS.map(([k, label, g]) => (
        <div key={k} className="w-[99px] shrink-0 border-r border-[#c6c6c6] pl-1.5 pt-1.5">
          <div className="h-[62px] w-[86px] border border-[#b0b0b0] bg-white"><Thumb kind={k} /></div>
          <div className={g ? "mt-1.5 flex items-center whitespace-pre pl-px leading-[18px] tracking-[-0.3px] [word-spacing:-0.6px]" : "mt-1.5 flex items-center whitespace-pre leading-[18px] tracking-[-0.15px] [word-spacing:-0.6px]"}>{g ? <Grid /> : null}{label}</div>
        </div>
      ))}
      <div className="w-[99px] shrink-0 border-r border-[#c6c6c6] bg-[#fafafa] pl-1.5 pt-1.5">
        <div className="h-[62px] w-[86px] border border-[#ddd] bg-white"><Thumb kind="story" /></div>
        <div className="mt-[5px] flex items-center whitespace-pre pl-px font-semibold leading-[18px] text-[#444]">
          <svg className="mr-[5px] block h-[13px] w-[11px]" viewBox="0 0 11 13" fill="none" stroke="#555" strokeWidth="1.100"><path d="M5.500 3v9L.6 10.500v-9zM5.500 3v9l4.900-1.500v-9z" /></svg>
          S-1 | 2022...
        </div>
      </div>
      <div className="flex flex-1 flex-col">
        <div className="h-[33px] border-b border-[#c6c6c6]"><Ic x={1334} w={32} y={609} h={32} s="#555"><path d="M1350 629.500h-6.500v-11h11v6M1346.500 627v-3M1349 627v-6M1351.500 625v-3" /><path d="M1354.500 624.500v8M1350.500 628.500h8" strokeWidth="1.800" /></Ic></div>
        <div className="h-8 border-b border-[#c6c6c6]"><Ic x={1334} w={32} y={641} h={31} s="#555"><path d="M1350 661.500h-6.500v-11h11v6M1349 650.500v11M1343.500 656h11" /><path d="M1354.500 655.500v8M1350.500 659.500h8" strokeWidth="1.800" /></Ic></div>
        <Ic x={1334} w={32} y={674} h={31} s="#555"><path d="M1349.500 683.500v9l-6-1.500v-9zM1349.500 683.500l6-1.500v4M1349.500 692.500v2" /><path d="M1354.500 688v8M1350.500 692h8" strokeWidth="1.800" /></Ic>
      </div>
    </div>
  );
}

function StatusBar() {
  return (
    <div className="flex h-5 justify-end bg-[#ebebeb]">
      <Ic x={990} w={376} y={706} h={20} s="#cfcfcf">
        <path d="M999.500 706v20M1126.500 706v20M1153.500 706v20M1180.500 706v20M1227.500 706v20M1298.500 706v20" strokeWidth="1" />
        <g fill="#555" stroke="none"><path d="M1236 712h1.500v8h-1.500zM1242 711.500v8l-4.500-4zM1257 711.500v8l-4.500-4zM1269 711.500v8l4.500-4zM1284 711.500v8l4.500-4zM1288.500 712h1.500v8h-1.500zM1328 711h11v6h-11zM1328 718h3v3h-3zM1332 718h3v3h-3zM1336 718h3v3h-3z" /></g>
        <path d="M1307 710h3v3h-3zM1311 710h3v3h-3zM1315 710h3v3h-3zM1307 714h3v3h-3zM1311 714h3v3h-3zM1315 714h3v3h-3zM1307 718h3v3h-3zM1311 718h3v3h-3zM1315 718h3v3h-3zM1349 710h11v11h-11z" fill="#bbb" stroke="none" />
      </Ic>
    </div>
  );
}

function Taskbar() {
  return (
    <div className="flex h-[23px] bg-[#1c1c1c]">
      <Ic x={0} w={246} y={726} h={23}>
        <path d="M16 740l7-1v6.500h-7zM24 738.800l8-1v7.700h-8zM16 746.500h7v6h-7zM24 746.500h8v6h-8z" fill="#fff" stroke="none" />
        <circle cx="74.500" cy="743.500" r="5" stroke="#eee" strokeWidth="1.600" /><path d="M71 747l-4 4" stroke="#eee" strokeWidth="1.600" />
        <path d="M112 737h9l2 2h11v12h-22z" fill="#ffcf55" stroke="none" /><path d="M112 737h9l2 3h-11z" fill="#e8a82a" stroke="none" /><path d="M116 747h14v4h-14z" fill="#3a94d8" stroke="none" />
        <defs><linearGradient id="pg" x1="0" x2="1"><stop offset="0" stopColor="#8574ef" /><stop offset="1" stopColor="#498bea" /></linearGradient></defs>
        <rect x="160" y="734" width="24" height="24" rx="5" fill="url(#pg)" stroke="none" />
        <path d="M167.500 752v-12h6.500a4 4 0 010 8h-3" stroke="#fff" strokeWidth="3.200" />
        <circle cx="221" cy="746" r="12" fill="#f6c42c" stroke="none" />
        <path d="M210.600 740A12 12 0 01231.400 740H221L217 749Z" fill="#e03c31" stroke="none" />
        <path d="M210.600 740A12 12 0 00211 752h9l-4-4Z" fill="#2f9e4d" stroke="none" />
        <circle cx="221" cy="746" r="6" fill="#fff" stroke="none" /><circle cx="221" cy="746" r="4.700" fill="#3f7fe8" stroke="none" />
      </Ic>
      <Ic x={246} w={48} y={726} h={23}>
        <path d="M246 726h48v23h-48z" fill="#4a4a4a" stroke="none" /><path d="M259 735h22v14h-22z" fill="#f4f6f7" stroke="none" />
        <Crosses cx={270} cy={744} k={1.05} mono="#3d82a8" />
      </Ic>
      <div className="ml-auto flex">
        <Ic x={1145} w={115} y={726} h={23} s="#eee">
          <path d="M1153.500 748l5.500-5.500 5.500 5.500" strokeWidth="1.400" />
          <path d="M1179 749c1-5 5-8 10.500-8M1182.500 749c1-3 3-4.800 7-5M1186 749c.6-1.500 1.500-2 3.500-2.200" strokeWidth="1.300" />
          <path d="M1204 742.500h9.500v7M1206 745h6v4h-6z" /><path d="M1206 745h6v4h-6z" fill="#eee" /><path d="M1200.500 740v3M1203.500 740v3M1199.500 743.500h5v2l-2.500 2-2.500-2z" fill="#eee" />
          <path d="M1223.500 749v-5h3l4-3.500V749M1232.500 743.500q1.500 2.500 0 5M1235 741.500q3 4 1.500 8M1237.500 739.500q3.500 4.500 2 10" />
        </Ic>
        <span className="w-[52px] pl-[3px] font-['Open_Sans',sans-serif] text-[12px] leading-[21px] tracking-[-0.5px] text-white">23:02</span>
        <Ic x={1312} w={54} y={726} h={23} s="#1c1c1c">
          <path d="M1325 738h16v13h-16z" fill="#fff" stroke="none" /><path d="M1328 742h10M1328 745.500h10M1328 749h8" />
          <circle cx="1342" cy="751" r="6.500" fill="#444" stroke="#999" />
          <path d="M1361.500 726v23" stroke="#777" strokeWidth="1" />
        </Ic>
      </div>
    </div>
  );
}

export default function App() {
  return (
    <div className="flex h-[749px] w-[1366px] flex-col overflow-hidden bg-white">
      <TitleBar />
      <MenuBar />
      <Toolbar />
      <div className="flex h-[526px]">
        <Sidebar />
        <StoryView />
      </div>
      <SheetTabs />
      <StatusBar />
      <Taskbar />
    </div>
  );
}
